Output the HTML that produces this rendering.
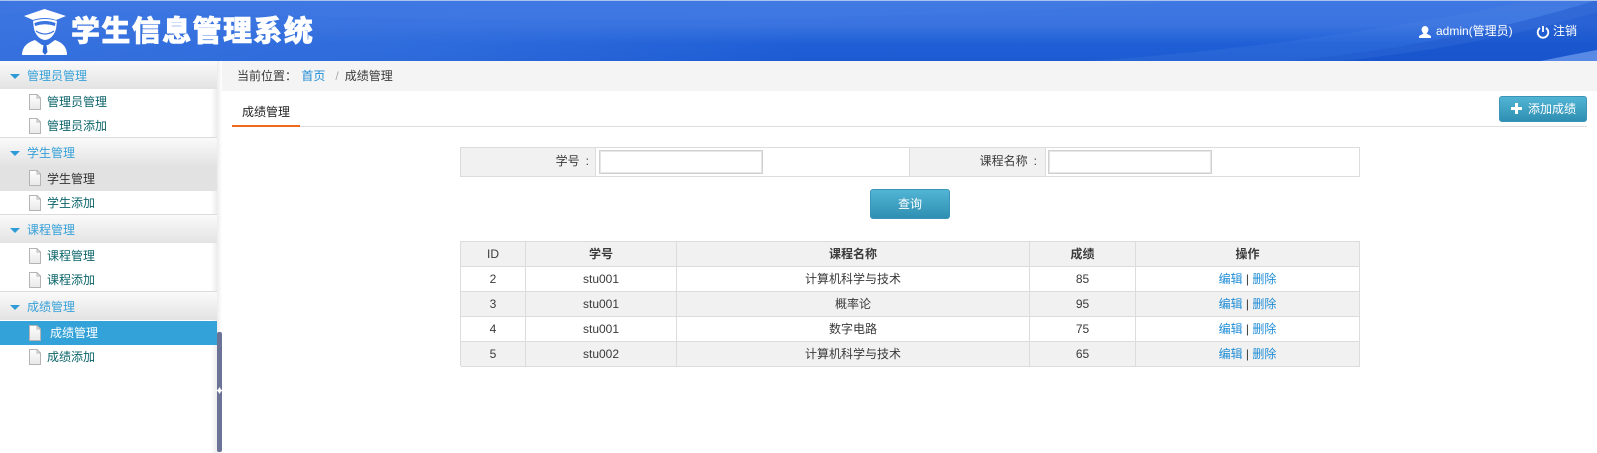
<!DOCTYPE html>
<html lang="zh-CN">
<head>
<meta charset="utf-8">
<title>学生信息管理系统</title>
<style>
html,body{margin:0;padding:0;width:1597px;height:453px;overflow:hidden;background:#fff;font:12px/1 "Liberation Sans","Noto Sans CJK SC",sans-serif;color:#3a3a3a}
.a,.c{position:absolute;white-space:nowrap}
.c{text-align:center}
a{color:#1f8dd6;text-decoration:none}
#hd{left:0;top:0;width:1597px;height:61px;background:linear-gradient(90deg,rgba(58,116,224,.85) 0,rgba(58,116,224,.6) 25%,rgba(58,116,224,0) 50%),linear-gradient(180deg,#3f78e2 0,#3a74e0 40%,#1f5fd6 72%,#1c5bd2 100%);overflow:hidden}
#hd .top{position:absolute;left:0;top:0;width:100%;height:1px;background:#a9c3ee}
.gt{left:0;width:217px;height:28px;background:linear-gradient(180deg,#fafafa,#e3e3e3);border-top:1px solid #dcdcdc;box-sizing:content-box}
.gt span{position:absolute;left:27px;top:1px;line-height:28px;color:#36a0d8}
.gt i{position:absolute;left:9.5px;top:13px;width:0;height:0;border-left:5px solid transparent;border-right:5px solid transparent;border-top:5px solid #2f9bd6}
.it{left:0;width:217px;height:24px;line-height:24px}
.it span{position:absolute;left:47px;top:0;color:#0b6469}
.it svg{position:absolute;left:29px;top:4px}
.it.h{background:#e2e2e2;height:25px;line-height:25px}.it.h span{color:#333;top:1px}
.it.s{background:#33a2d8}.it.s span{color:#fff;left:50px}
.cell{position:absolute;box-sizing:border-box;height:25px;line-height:24px;text-align:center;border-right:1px solid #dcdcdc;border-bottom:1px solid #dcdcdc}
.btn{background:linear-gradient(180deg,#52b5d5,#2f8fb2);border:1px solid #3a94b6;border-radius:3px;box-sizing:border-box;color:#fff}
.inp{position:absolute;box-sizing:border-box;background:#fff;border:1px solid #d0d0d0;box-shadow:inset 0 0 0 1px #e6e6e6}
.cl{margin-left:6px}
</style>
</head>
<body>
<div class="a" id="hd">
<svg width="1597" height="61" style="position:absolute;left:0;top:0">
<path d="M1290 61 C1400 50 1500 30 1597 0 L1597 61Z" fill="#1650c8" opacity=".5"/>
<path d="M1090 61 C1250 50 1420 25 1530 0 L1597 0 L1597 12 C1520 35 1430 52 1340 61Z" fill="#5e8de6" opacity=".16"/>
<path d="M1541 61 Q1570 55 1597 50 L1597 61Z" fill="#5f8fe8" opacity=".9"/>
<path d="M0 0H1200C1000 16 700 22 500 20S100 8 0 14Z" fill="#4d82e6" opacity=".2"/>
<path d="M44.5 9 L66 16 L56 20 Q45 16 33 20 L24 16Z" fill="#fff"/>
<path d="M33 21 Q45 17 57 21 L56 29 Q53 39 45 40 Q37 39 34 29Z" fill="#fff"/>
<path d="M34.5 23 Q45 19 55.5 23 L55 26 Q45 22.5 35 26Z" fill="#3a74e0"/>
<path d="M36 31 Q45 37 54 31" fill="none" stroke="#3a74e0" stroke-width="1.2"/>
<path d="M22 55 Q22 44 35 40 L42 45 L48 45 L55 40 Q67 44 67 55Z" fill="#fff"/>
<path d="M43.5 45 H46.5 L47.5 52 L45 55 L42.5 52Z" fill="#2d68d6"/>
<ellipse cx="1425" cy="29.8" rx="3.4" ry="3.8" fill="#fff"/>
<path d="M1423.3 32 h3.4 v1.6 l4.3 2.4 v2 h-12 v-2 l4.3-2.4Z" fill="#fff"/>
<path d="M1540 28 a5.3 5.3 0 1 0 6 0" fill="none" stroke="#fff" stroke-width="1.8"/>
<path d="M1543 26 v6" stroke="#fff" stroke-width="1.8"/>
</svg>
<div class="top"></div>
<div class="a" style="left:71px;top:15px;font-size:29px;line-height:34px;letter-spacing:1.4px;font-weight:900;color:#fff;-webkit-text-stroke:.6px #fff">学生信息管理系统</div>
<div class="a" style="left:1436px;top:24px;line-height:14px;color:#fff">admin(管理员)</div>
<div class="a" style="left:1553px;top:24px;line-height:14px;color:#fff">注销</div>
</div>

<div class="a" style="left:217px;top:61px;width:5px;height:392px;background:linear-gradient(90deg,#ececec,#fff)"></div>
<div class="a" style="left:211px;top:61px;width:6px;height:392px;background:linear-gradient(90deg,rgba(235,235,235,0),rgba(235,235,235,.9))"></div>

<svg width="0" height="0" style="position:absolute"><defs>
<linearGradient id="dg" x1="0" y1="0" x2="0" y2="1"><stop offset="0" stop-color="#fff"/><stop offset="1" stop-color="#e8e8e8"/></linearGradient>
<symbol id="doc" viewBox="0 0 12 16"><path d="M.5.5H8L11.5 4V15.5H.5Z" fill="url(#dg)" stroke="#b4b4b4"/><path d="M8 .5V4H11.5" fill="none" stroke="#b4b4b4"/></symbol>
</defs></svg>

<div class="a gt" style="top:61px;border-top:0"><i></i><span>管理员管理</span></div>
<div class="a it" style="top:90px"><svg width="12" height="16"><use href="#doc"/></svg><span>管理员管理</span></div>
<div class="a it" style="top:114px"><svg width="12" height="16"><use href="#doc"/></svg><span>管理员添加</span></div>

<div class="a gt" style="top:137px"><i></i><span>学生管理</span></div>
<div class="a it h" style="top:166px"><svg width="12" height="16"><use href="#doc"/></svg><span>学生管理</span></div>
<div class="a it" style="top:191px"><svg width="12" height="16"><use href="#doc"/></svg><span>学生添加</span></div>

<div class="a gt" style="top:214px"><i></i><span>课程管理</span></div>
<div class="a it" style="top:244px"><svg width="12" height="16"><use href="#doc"/></svg><span>课程管理</span></div>
<div class="a it" style="top:268px"><svg width="12" height="16"><use href="#doc"/></svg><span>课程添加</span></div>

<div class="a gt" style="top:291px"><i></i><span>成绩管理</span></div>
<div class="a it s" style="top:321px"><svg width="12" height="16"><use href="#doc"/></svg><span>成绩管理</span></div>
<div class="a it" style="top:345px"><svg width="12" height="16"><use href="#doc"/></svg><span>成绩添加</span></div>

<div class="a" style="left:217px;top:332px;width:5px;height:120px;background:#6b7396;border-radius:2px"></div>
<svg class="a" style="left:216px;top:387px" width="7" height="7"><path d="M3.5 0L5 2.5L7 3.5L5 4.5L3.5 7L2 4.5L0 3.5L2 2.5Z" fill="#fff"/></svg>

<div class="a" style="left:222px;top:61px;width:1375px;height:30px;background:#f4f4f4"></div>
<div class="a" style="left:237px;top:61px;line-height:30px">当前位置： <a href="#" style="margin-left:1px">首页</a><span style="color:#aaa;margin:0 6px 0 10px">/</span>成绩管理</div>
<div class="a" style="left:242px;top:104px;line-height:16px;color:#222">成绩管理</div>
<div class="a" style="left:232px;top:126px;width:1355px;height:1px;background:#ddd"></div>
<div class="a" style="left:232px;top:125px;width:68px;height:2px;background:#f06a1c"></div>
<div class="a btn" style="left:1499px;top:96px;width:88px;height:26px;line-height:25px;padding-left:28px">添加成绩</div>
<svg class="a" style="left:1511px;top:103px" width="11" height="11"><path d="M4 0H7V4H11V7H7V11H4V7H0V4H4Z" fill="#fff"/></svg>

<div class="a" style="left:460px;top:147px;width:900px;height:30px;box-sizing:border-box;border:1px solid #dcdcdc"></div>
<div class="a" style="left:461px;top:148px;width:134px;height:28px;background:#f1f1f1;border-right:1px solid #dcdcdc;text-align:right;line-height:27px;box-sizing:content-box">学号<span class="cl" style="margin-right:6px">:</span></div>
<div class="a" style="left:909px;top:148px;width:135px;height:28px;background:#f1f1f1;border-left:1px solid #dcdcdc;border-right:1px solid #dcdcdc;text-align:right;line-height:27px">课程名称<span class="cl" style="margin-right:8px">:</span></div>
<div class="inp" style="left:599px;top:150px;width:164px;height:24px"></div>
<div class="inp" style="left:1048px;top:150px;width:164px;height:24px"></div>
<div class="a btn c" style="left:870px;top:189px;width:80px;height:30px;line-height:28px">查询</div>

<div id="tb" class="a" style="left:460px;top:241px;width:900px;height:125px;border-top:1px solid #dcdcdc;border-left:1px solid #dcdcdc;box-sizing:border-box">
<div style="position:absolute;left:0;top:0;width:899px;height:25px;background:#f1f1f1"></div>
<div style="position:absolute;left:0;top:49px;width:899px;height:25px;background:#f1f1f1"></div>
<div style="position:absolute;left:0;top:99px;width:899px;height:25px;background:#f1f1f1"></div>

<div class="cell" style="left:0;top:0;width:65px">ID</div>
<div class="cell" style="left:65px;top:0;width:151px;font-weight:700">学号</div>
<div class="cell" style="left:216px;top:0;width:353px;font-weight:700">课程名称</div>
<div class="cell" style="left:569px;top:0;width:106px;font-weight:700">成绩</div>
<div class="cell" style="left:675px;top:0;width:224px;font-weight:700">操作</div>

<div class="cell" style="left:0;top:25px;width:65px">2</div>
<div class="cell" style="left:65px;top:25px;width:151px">stu001</div>
<div class="cell" style="left:216px;top:25px;width:353px">计算机科学与技术</div>
<div class="cell" style="left:569px;top:25px;width:106px">85</div>
<div class="cell" style="left:675px;top:25px;width:224px"><a href="#">编辑</a> | <a href="#">删除</a></div>

<div class="cell" style="left:0;top:50px;width:65px">3</div>
<div class="cell" style="left:65px;top:50px;width:151px">stu001</div>
<div class="cell" style="left:216px;top:50px;width:353px">概率论</div>
<div class="cell" style="left:569px;top:50px;width:106px">95</div>
<div class="cell" style="left:675px;top:50px;width:224px"><a href="#">编辑</a> | <a href="#">删除</a></div>

<div class="cell" style="left:0;top:75px;width:65px">4</div>
<div class="cell" style="left:65px;top:75px;width:151px">stu001</div>
<div class="cell" style="left:216px;top:75px;width:353px">数字电路</div>
<div class="cell" style="left:569px;top:75px;width:106px">75</div>
<div class="cell" style="left:675px;top:75px;width:224px"><a href="#">编辑</a> | <a href="#">删除</a></div>

<div class="cell" style="left:0;top:100px;width:65px">5</div>
<div class="cell" style="left:65px;top:100px;width:151px">stu002</div>
<div class="cell" style="left:216px;top:100px;width:353px">计算机科学与技术</div>
<div class="cell" style="left:569px;top:100px;width:106px">65</div>
<div class="cell" style="left:675px;top:100px;width:224px"><a href="#">编辑</a> | <a href="#">删除</a></div>
</div>
</body>
</html>
